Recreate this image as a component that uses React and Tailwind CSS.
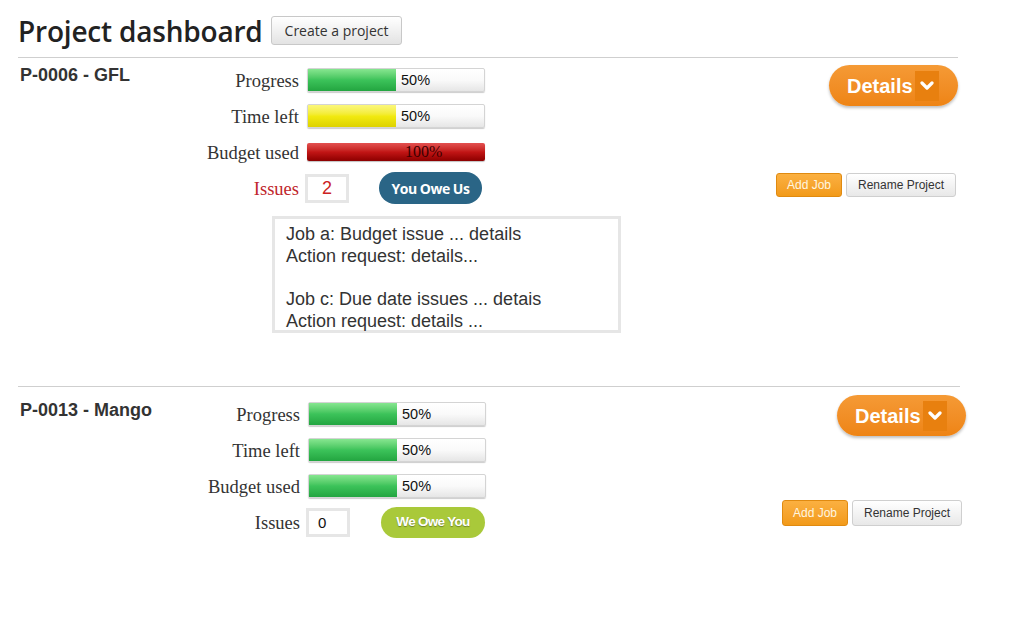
import React from 'react';

const barFills = {
  green: 'bg-gradient-to-b from-[#86e690] via-[#3cc35a] to-[#22a540]',
  yellow: 'bg-gradient-to-b from-[#fbf77a] via-[#f2ea10] to-[#ddd200]',
  red: 'bg-gradient-to-b from-[#e35050] via-[#c21515] to-[#8c0000]',
};

const Bar = ({ pct, color = 'green', slim = false }) => {
  if (pct >= 100) {
    return (
      <div
        className={`relative w-[178px] ${slim ? 'h-[18px]' : 'h-[24px]'} rounded-[2px] ${barFills[color]} shadow-[0_1px_1px_rgba(0,0,0,0.25)] flex items-center pl-[98px]`}
      >
        <span className="text-[16px] leading-none text-[#3a0000] font-['Liberation_Serif',serif]">{pct}%</span>
      </div>
    );
  }
  return (
    <div className="relative w-[178px] h-[24px] flex border border-[#d4d4d4] rounded-[2px] bg-gradient-to-b from-white via-[#fafafa] to-[#e6e6e6] shadow-[0_1px_1px_rgba(0,0,0,0.2)]">
      <div className={`w-1/2 h-full ${barFills[color]}`} />
      <span className="ml-[5px] self-center text-[14.5px] leading-none text-[#111] font-['Liberation_Sans',Arial,sans-serif]">
        {pct}%
      </span>
    </div>
  );
};

const Row = ({ label, children, labelClass = 'text-[#333]' }) => (
  <div className="flex items-center h-[36px]">
    <span className={`w-[99px] pt-[3px] whitespace-nowrap text-right text-[18.5px] leading-none font-['Liberation_Serif',serif] ${labelClass}`}>{label}</span>
    <div className="ml-[8px] flex items-center">{children}</div>
  </div>
);

const DetailsPill = () => (
  <div className="flex items-center h-[41px] w-[129px] rounded-full bg-gradient-to-b from-[#f59a35] to-[#ee8414] shadow-[0_2px_3px_rgba(0,0,0,0.25)] pl-[18px]">
    <span className="text-white font-bold text-[20px] leading-none font-['Liberation_Sans',Arial,sans-serif]">Details</span>
    <span className="ml-[2px] w-[24px] h-[30px] bg-[#e8800f] flex items-center justify-center">
      <svg width="14" height="10" viewBox="0 0 14 10">
        <polyline points="2,2 7,7 12,2" fill="none" stroke="white" strokeWidth="3.2" strokeLinecap="round" strokeLinejoin="round" />
      </svg>
    </span>
  </div>
);

const ActionButtons = ({ tall }) => (
  <div className="flex gap-[4px]">
    <button
      className={`w-[66px] ${tall ? 'h-[26px]' : 'h-[24px]'} rounded-[3px] border border-[#e08a10] bg-gradient-to-b from-[#fbb040] to-[#f29a18] text-[12px] text-[#fff6e0] font-['Liberation_Sans',Arial,sans-serif]`}
    >
      Add Job
    </button>
    <button
      className={`w-[110px] ${tall ? 'h-[26px]' : 'h-[24px]'} rounded-[3px] border border-[#cfcfcf] bg-gradient-to-b from-white to-[#e8e8e8] text-[12px] text-[#333] font-['Liberation_Sans',Arial,sans-serif]`}
    >
      Rename Project
    </button>
  </div>
);

const IssueBox = ({ count, red }) => (
  <div
    className={`-ml-[2px] w-[44px] h-[29px] border-[3px] border-[#e6e6e6] bg-white flex items-center ${red ? 'justify-center text-[#cc2222] text-[18px]' : 'pl-[9px] text-[#111] text-[15px]'} font-['Liberation_Sans',Arial,sans-serif] leading-none`}
  >
    {count}
  </div>
);

export default function App() {
  return (
    <div className="w-[1009px] h-[617px] bg-white overflow-hidden px-[18px]">
      <div className="flex items-center h-[57px] pt-[4px]">
        <h1 className="text-[28px] font-semibold text-[#222] leading-none font-['Open_Sans',sans-serif] tracking-[-0.2px]">
          Project dashboard
        </h1>
        <button className="ml-[8px] h-[29px] px-[13px] rounded-[3px] border border-[#c8c8c8] bg-gradient-to-b from-white to-[#e3e3e3] text-[14px] text-[#333] font-['Open_Sans',sans-serif]">
          Create a project
        </button>
      </div>

      {/* project 1 */}
      <div className="w-[940px] border-t border-[#cfcfcf] flex h-[329px]">
        <div className="w-[182px] pl-[2px] pt-[7px] text-[18px] leading-[20px] font-bold text-[#333] font-['Liberation_Sans',Arial,sans-serif]">
          P-0006 - GFL
        </div>
        <div className="pt-[4px]">
          <Row label="Progress"><Bar pct={50} /></Row>
          <Row label="Time left"><Bar pct={50} color="yellow" /></Row>
          <Row label="Budget used"><Bar pct={100} color="red" slim /></Row>
          <Row label="Issues" labelClass="text-[#c0262c]">
            <IssueBox count={2} red />
            <div className="ml-[30px] w-[103px] h-[32px] rounded-full bg-[#2a6586] flex items-center justify-center text-white font-bold text-[14px] tracking-[-0.5px] font-['Open_Sans',sans-serif]">
              You Owe Us
            </div>
          </Row>
          <div className="ml-[72px] mt-[10px] w-[349px] h-[117px] border-[3px] border-[#e6e6e6] px-[11px] pt-[4px] text-[18px] leading-[22px] text-[#333] font-['Liberation_Sans',Arial,sans-serif]">
            <div>Job a: Budget issue ... details</div>
            <div>Action request: details...</div>
            <div className="h-[21px]" />
            <div>Job c: Due date issues ... detais</div>
            <div>Action request: details ...</div>
          </div>
        </div>
        <div className="ml-auto flex flex-col items-end pt-[7px]">
          <DetailsPill />
          <div className="mt-[67px] mr-[2px]"><ActionButtons /></div>
        </div>
      </div>

      {/* project 2 */}
      <div className="w-[942px] border-t border-[#cfcfcf] flex">
        <div className="w-[183px] pl-[2px] pt-[13px] text-[18px] leading-[20px] font-bold text-[#333] font-['Liberation_Sans',Arial,sans-serif]">
          P-0013 - Mango
        </div>
        <div className="pt-[9px]">
          <Row label="Progress"><Bar pct={50} /></Row>
          <Row label="Time left"><Bar pct={50} /></Row>
          <Row label="Budget used"><Bar pct={50} /></Row>
          <Row label="Issues">
            <IssueBox count={0} />
            <div className="ml-[31px] w-[104px] h-[31px] rounded-full bg-[#a9c93a] flex items-center justify-center text-white font-bold text-[13.5px] tracking-[-0.7px] [text-shadow:0_1px_1px_rgba(0,0,0,0.35)] font-['Liberation_Sans',Arial,sans-serif]">
              We Owe You
            </div>
          </Row>
        </div>
        <div className="ml-auto -mr-[6px] flex flex-col items-end pt-[8px]">
          <DetailsPill />
          <div className="mt-[64px] mr-[4px]"><ActionButtons tall /></div>
        </div>
      </div>
    </div>
  );
}
